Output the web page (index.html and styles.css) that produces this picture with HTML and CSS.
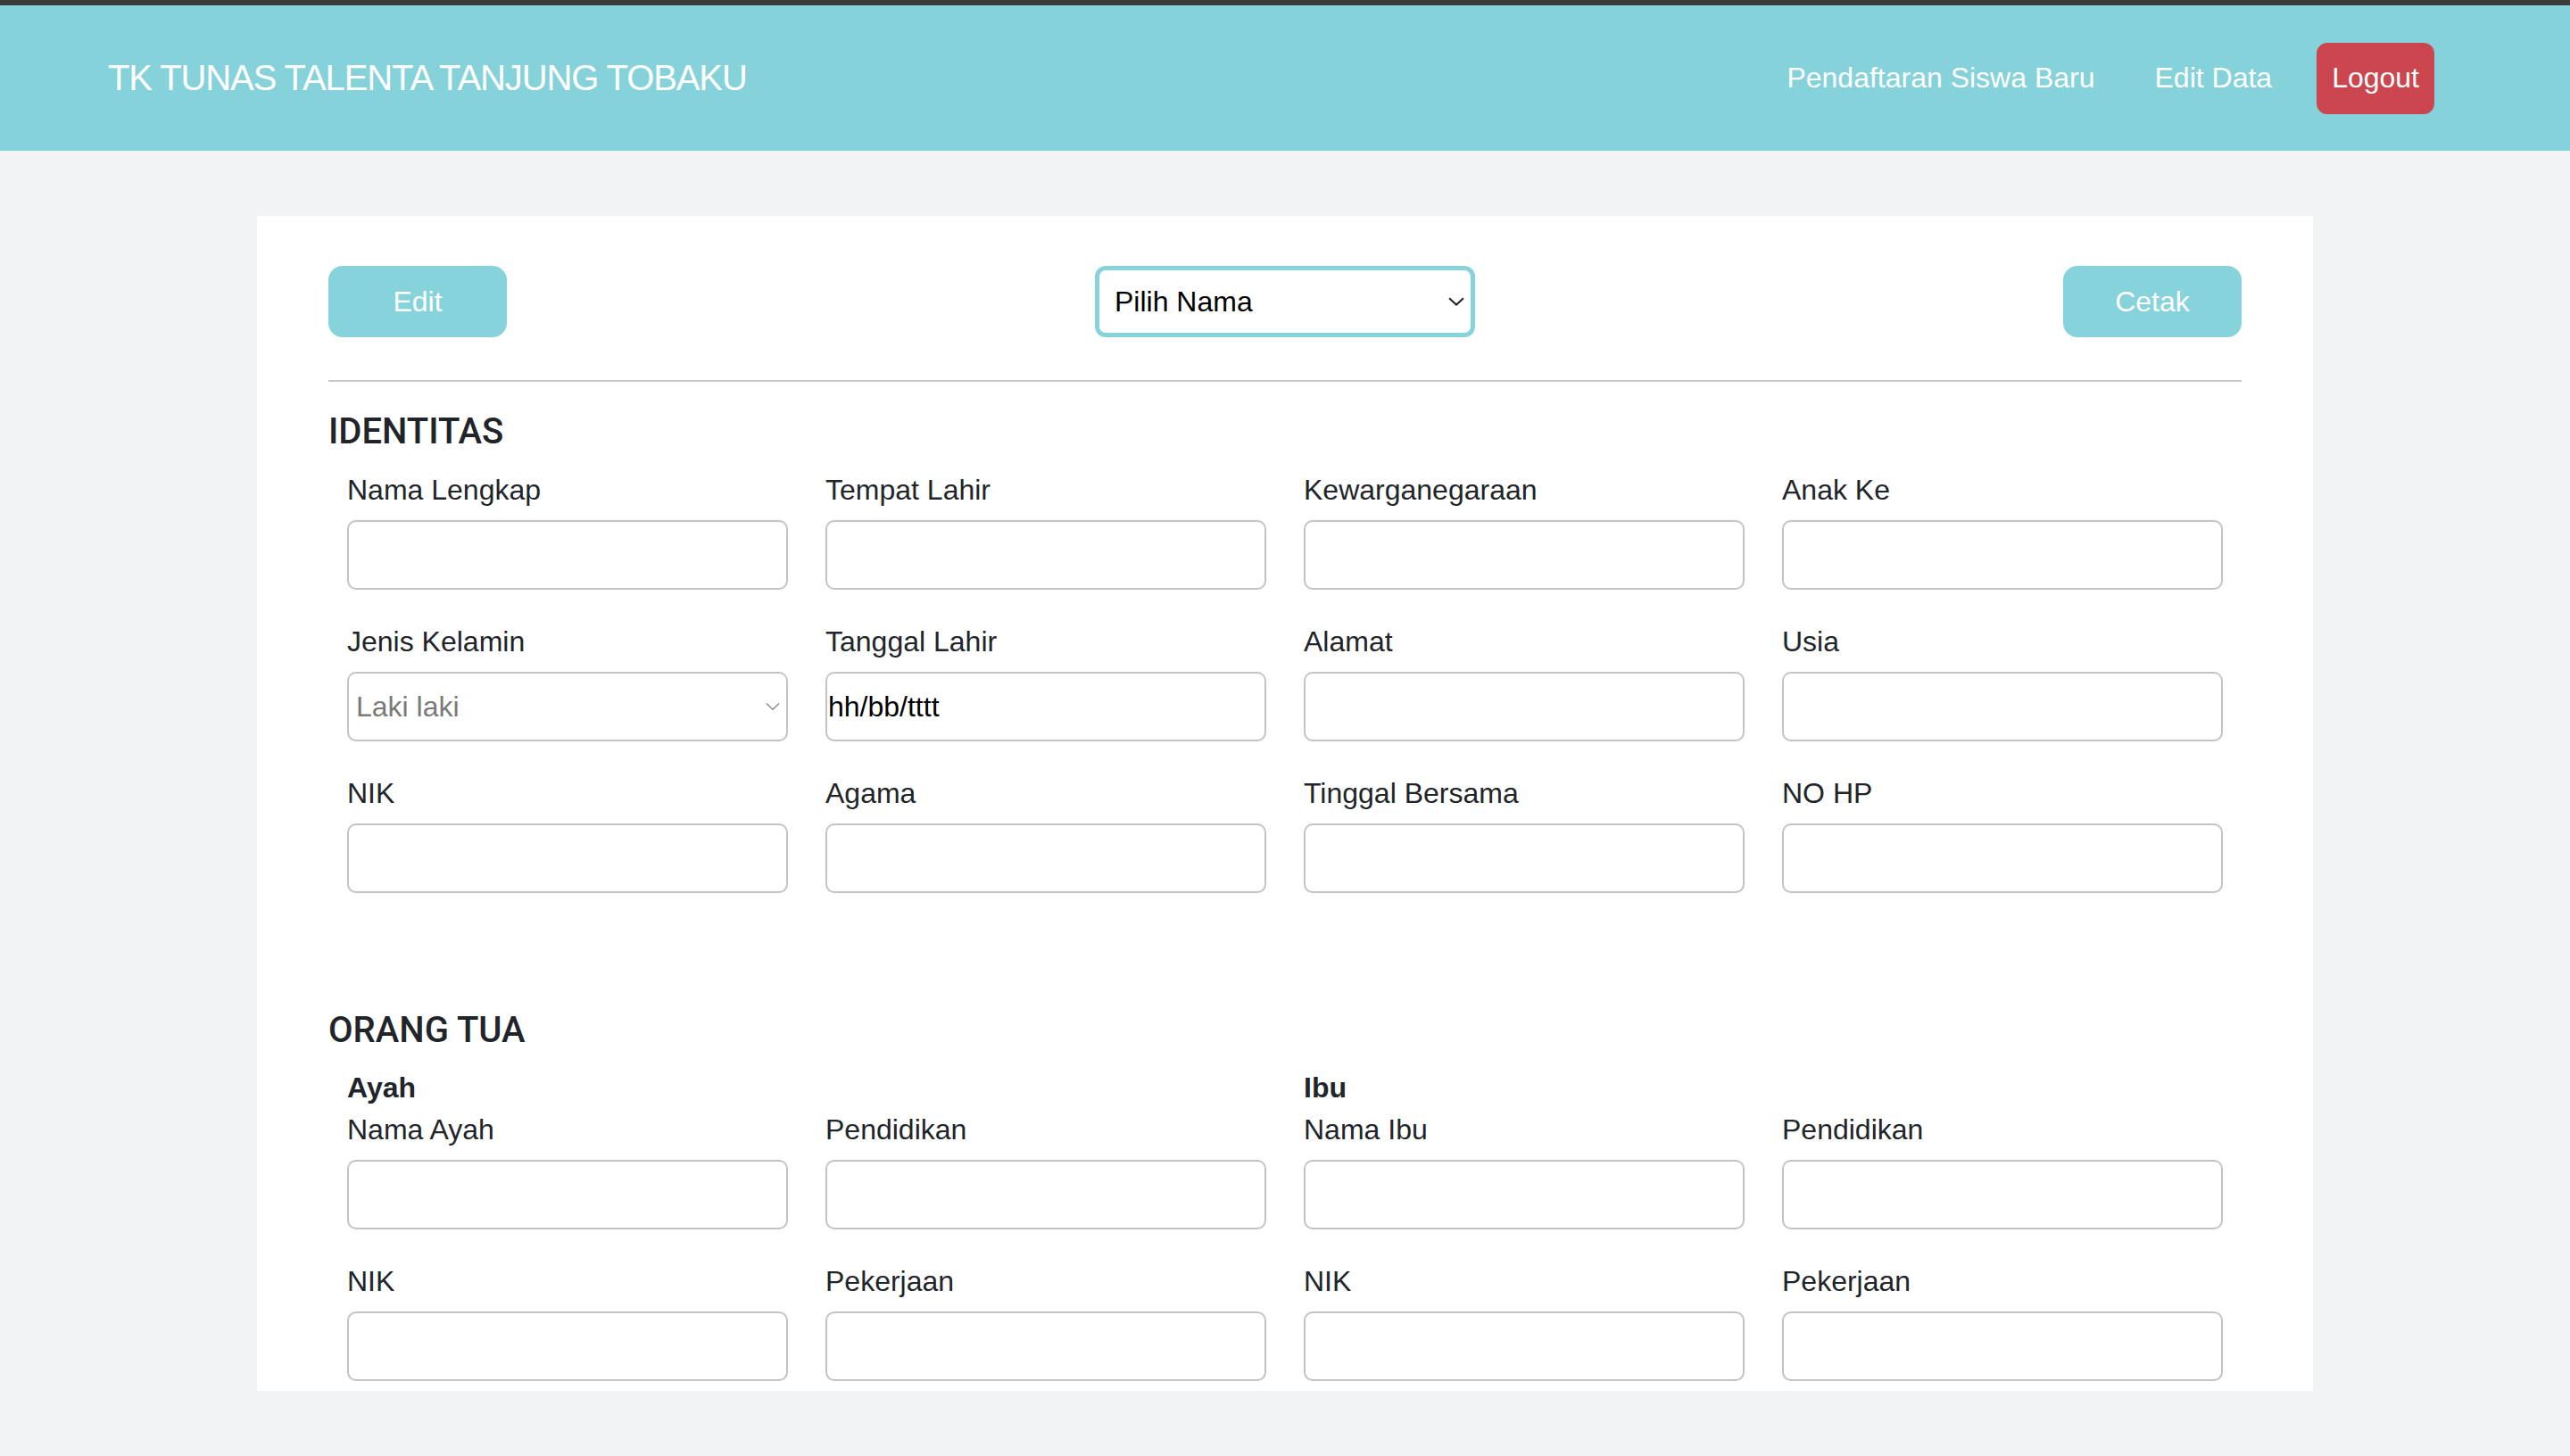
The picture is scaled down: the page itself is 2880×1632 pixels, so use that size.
FILE: index.html
```html
<!DOCTYPE html>
<html lang="id">
<head>
<meta charset="utf-8">
<title>TK Tunas Talenta Tanjung Tobaku</title>
<link rel="stylesheet" href="styles.css">
</head>
<body>
<div class="topbar"></div>
<nav class="navbar">
  <div class="brand">TK TUNAS TALENTA TANJUNG TOBAKU</div>
  <div class="nav-links">
    <a class="nav-link" href="#">Pendaftaran Siswa Baru</a>
    <a class="nav-link" href="#">Edit Data</a>
    <a class="nav-link logout" href="#">Logout</a>
  </div>
</nav>
<main class="page">
  <section class="card">
    <div class="toolbar">
      <button class="btn-teal">Edit</button>
      <div class="select-wrap pilih">
        <select class="pilih-select"><option>Pilih Nama</option></select>
        <svg class="chev chev-dark" width="18" height="10" viewBox="0 0 18 10"><path d="M1 1.2 L9 8.6 L17 1.2" fill="none" stroke="#222" stroke-width="2"/></svg>
      </div>
      <button class="btn-teal">Cetak</button>
    </div>
    <hr class="divider">
    <h2 class="section-title">IDENTITAS</h2>
    <div class="grid">
      <div class="field"><label>Nama Lengkap</label><input class="input" type="text"></div>
      <div class="field"><label>Tempat Lahir</label><input class="input" type="text"></div>
      <div class="field"><label>Kewarganegaraan</label><input class="input" type="text"></div>
      <div class="field"><label>Anak Ke</label><input class="input" type="text"></div>

      <div class="field"><label>Jenis Kelamin</label>
        <div class="select-wrap gender">
          <select class="input gender-select"><option>Laki laki</option></select>
          <svg class="chev chev-light" width="16" height="9" viewBox="0 0 16 9"><path d="M1 1 L8 7.8 L15 1" fill="none" stroke="#8a8a8a" stroke-width="1.4"/></svg>
        </div>
      </div>
      <div class="field"><label>Tanggal Lahir</label><input class="input date" type="text" value="hh/bb/tttt"></div>
      <div class="field"><label>Alamat</label><input class="input" type="text"></div>
      <div class="field"><label>Usia</label><input class="input" type="text"></div>

      <div class="field"><label>NIK</label><input class="input" type="text"></div>
      <div class="field"><label>Agama</label><input class="input" type="text"></div>
      <div class="field"><label>Tinggal Bersama</label><input class="input" type="text"></div>
      <div class="field"><label>NO HP</label><input class="input" type="text"></div>
    </div>

    <h2 class="section-title second">ORANG TUA</h2>
    <div class="grid">
      <div class="sub">Ayah</div>
      <div class="sub">Ibu</div>
      <div class="field"><label>Nama Ayah</label><input class="input" type="text"></div>
      <div class="field"><label>Pendidikan</label><input class="input" type="text"></div>
      <div class="field"><label>Nama Ibu</label><input class="input" type="text"></div>
      <div class="field"><label>Pendidikan</label><input class="input" type="text"></div>

      <div class="field"><label>NIK</label><input class="input" type="text"></div>
      <div class="field"><label>Pekerjaan</label><input class="input" type="text"></div>
      <div class="field"><label>NIK</label><input class="input" type="text"></div>
      <div class="field"><label>Pekerjaan</label><input class="input" type="text"></div>
    </div>
  </section>
</main>
</body>
</html>
```

FILE: styles.css
```css
* { box-sizing: border-box; }

html, body {
  margin: 0;
  padding: 0;
}

body {
  font-family: "Liberation Sans", Arial, sans-serif;
  color: #212529;
  background: #f2f3f5;
  height: 1632px;
  overflow: hidden;
}

.topbar {
  height: 6px;
  background: #3c3c3c;
}

.navbar {
  height: 163px;
  background: #86d2da;
  display: flex;
  align-items: center;
  justify-content: space-between;
  padding: 0 152px 0 121px;
}

.brand {
  color: #ffffff;
  font-size: 40px;
  letter-spacing: -1.1px;
  white-space: nowrap;
}

.nav-links {
  display: flex;
  align-items: center;
  gap: 33px;
}

.nav-link {
  color: #ffffff;
  text-decoration: none;
  font-size: 32px;
  padding: 0 17px;
  white-space: nowrap;
}

.logout {
  height: 80px;
  display: flex;
  align-items: center;
  background: #cc4650;
  border-radius: 12px;
}

.page {
  padding-top: 73px;
}

.card {
  width: 2304px;
  height: 1317px;
  margin: 0 auto;
  background: #ffffff;
  padding: 56px 80px 0;
  overflow: hidden;
}

.toolbar {
  display: flex;
  align-items: center;
  justify-content: space-between;
  height: 80px;
}

.btn-teal {
  width: 200px;
  height: 80px;
  border: none;
  border-radius: 16px;
  background: #87d3db;
  color: #ffffff;
  font-family: inherit;
  font-size: 32px;
}

.select-wrap {
  position: relative;
}

.pilih {
  width: 426px;
  height: 80px;
  border: 5px solid #87d3db;
  border-radius: 12px;
  background: #fff;
}

.pilih-select {
  appearance: none;
  -webkit-appearance: none;
  width: 100%;
  height: 100%;
  border: none;
  background: transparent;
  font-family: inherit;
  font-size: 32px;
  color: #000;
  padding: 0 0 0 17px;
  outline: none;
}

.chev {
  position: absolute;
  top: 50%;
  transform: translateY(-50%);
  pointer-events: none;
}

.chev-dark {
  right: 7px;
}

.chev-light {
  right: 9px;
}

.divider {
  border: none;
  border-top: 2px solid #c8c9ca;
  margin: 48px 0 32px;
  height: 0;
}

.section-title {
  font-family: Roboto, "Liberation Sans", Arial, sans-serif;
  font-weight: 500;
  font-size: 40px;
  line-height: 48px;
  margin: 0 0 20px;
  color: #212529;
}

.section-title.second {
  margin-top: 93px;
  margin-bottom: 18px;
}

.grid {
  display: grid;
  grid-template-columns: repeat(4, 1fr);
}

.sub {
  grid-column: span 2;
  padding: 0 21px;
  font-weight: bold;
  font-size: 32px;
  line-height: 44px;
  margin-bottom: 4px;
}

.field {
  padding: 0 21px;
  margin-bottom: 37px;
}

.field label {
  display: block;
  font-size: 32px;
  line-height: 43px;
  margin-bottom: 12px;
}

.input {
  display: block;
  width: 100%;
  height: 78px;
  border: 2px solid #c3c3c3;
  border-radius: 10px;
  background: #ffffff;
  font-family: inherit;
  font-size: 32px;
  padding: 0 8px;
  outline: none;
}

.gender-select {
  appearance: none;
  -webkit-appearance: none;
  color: #7a7a7a;
}

.date {
  padding-left: 1px;
  color: #000;
}
```
